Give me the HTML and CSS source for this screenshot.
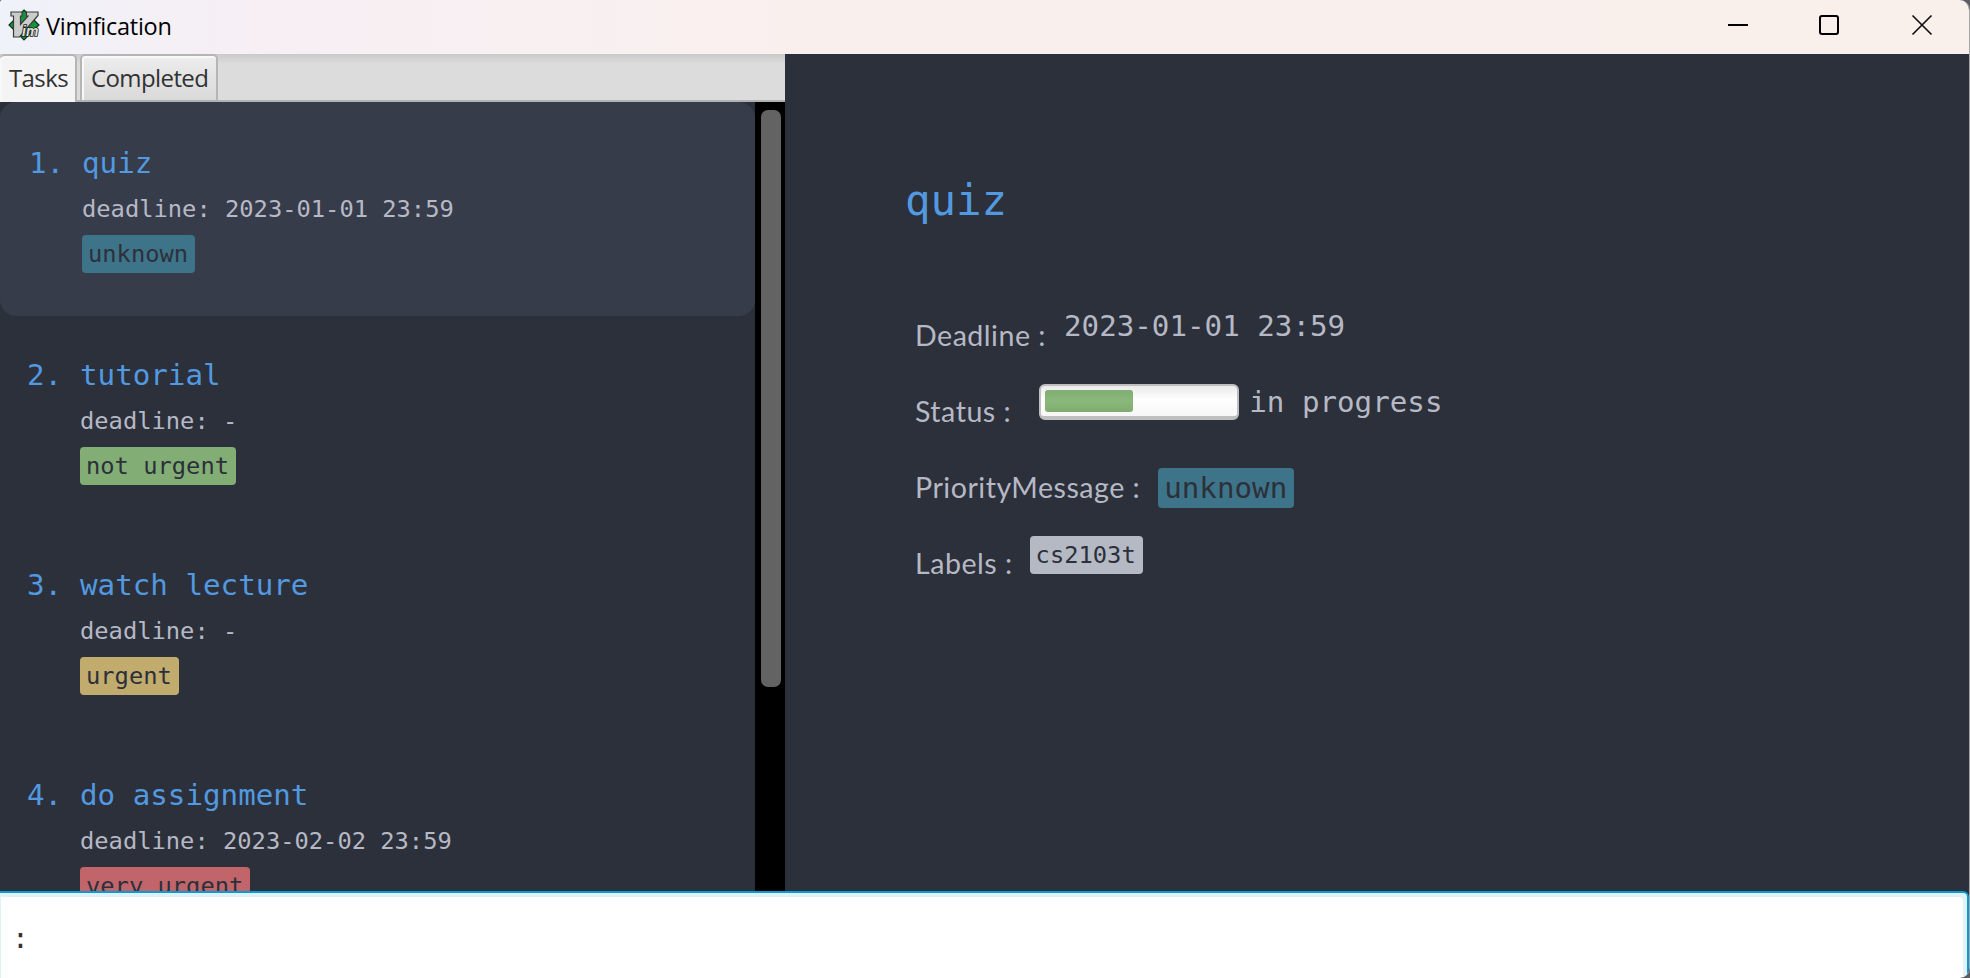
FILE: index.html
```html
<!DOCTYPE html>
<html lang="en">
<head>
<meta charset="utf-8">
<title>Vimification</title>
<link rel="stylesheet" href="styles.css">
</head>
<body>
<div class="window">
  <header class="titlebar">
    <svg class="app-icon" viewBox="0 0 32 32" width="32" height="32">
      <path d="M16 1 31 16 16 31 1 16Z" fill="#15933c" stroke="#12301c" stroke-width="1.2"/>
      <path d="M3 3H14V7H12.500V15.500L20 7H18.500V3H30V6.500L11.500 28H5.500V7H3Z" fill="#ccccca" stroke="#3a3a3a" stroke-width="1.2"/>
      <text class="app-icon-text" x="14" y="27">im</text>
    </svg>
    <span class="app-name">Vimification</span>
    <div class="window-buttons">
      <svg class="minimize" viewBox="0 0 22 22" width="22" height="22"><path d="M1 11H21" stroke="#000" stroke-width="2"/></svg>
      <svg viewBox="0 0 22 22" width="22" height="22"><rect x="2" y="2" width="18" height="18" rx="2" fill="none" stroke="#000" stroke-width="2"/></svg>
      <svg viewBox="0 0 22 22" width="22" height="22"><path d="M1.500 1.500 20.500 20.500M20.500 1.500 1.500 20.500" stroke="#111" stroke-width="1.700"/></svg>
    </div>
  </header>
  <main class="content">
    <section class="tasks">
      <nav class="tabs">
        <div class="tab active">Tasks</div>
        <div class="tab">Completed</div>
      </nav>
      <div class="list-area">
        <div class="list">
          <article class="task selected">
            <span class="index">1.</span>
            <div class="task-body">
              <h2>quiz</h2>
              <p>deadline: 2023-01-01 23:59</p>
              <span class="badge unknown">unknown</span>
            </div>
          </article>
          <article class="task">
            <span class="index">2.</span>
            <div class="task-body">
              <h2>tutorial</h2>
              <p>deadline: -</p>
              <span class="badge low">not urgent</span>
            </div>
          </article>
          <article class="task">
            <span class="index">3.</span>
            <div class="task-body">
              <h2>watch lecture</h2>
              <p>deadline: -</p>
              <span class="badge medium">urgent</span>
            </div>
          </article>
          <article class="task">
            <span class="index">4.</span>
            <div class="task-body">
              <h2>do assignment</h2>
              <p>deadline: 2023-02-02 23:59</p>
              <span class="badge high">very urgent</span>
            </div>
          </article>
        </div>
        <div class="scrollbar"><div class="thumb"></div></div>
      </div>
    </section>
    <section class="detail">
      <h1>quiz</h1>
      <div class="row"><span class="key">Deadline :</span><span class="value date">2023-01-01 23:59</span></div>
      <div class="row"><span class="key">Status :</span><div class="progress"><div class="progress-bar"></div></div><span class="value">in progress</span></div>
      <div class="row"><span class="key">PriorityMessage :</span><span class="badge large unknown">unknown</span></div>
      <div class="row"><span class="key">Labels :</span><span class="badge label">cs2103t</span></div>
    </section>
  </main>
  <footer class="command">:</footer>
</div>
</body>
</html>
```
FILE: styles.css
```css
* { box-sizing: border-box; }
body { margin: 0; background: #5c5e62; }
h1, h2, p { margin: 0; font-weight: 400; }
.window {
  width: 1970px;
  height: 978px;
  display: flex;
  flex-direction: column;
  overflow: hidden;
  border-right: 1px solid #a5a6a8;
  border-radius: 2px 10px 10px 0;
  background: #2c303a;
  font-family: "DejaVu Sans Mono", monospace;
  color: #b6b9c5;
}
.titlebar {
  height: 54px;
  flex: none;
  display: flex;
  align-items: flex-start;
  padding: 9px 36px 0 8px;
  background: linear-gradient(90deg, #eff2f9 0, #f7eff4 260px, #f9f0ee 800px, #f9f0ec 100%);
}
.app-icon { flex: none; }
.app-icon-text {
  font: italic 700 14px "Liberation Sans", sans-serif;
  fill: #deded8;
  stroke: #222;
  stroke-width: 1.6px;
  paint-order: stroke;
}
.app-name {
  margin-left: 6px;
  font: 23.5px/34px "Open Sans", sans-serif;
  letter-spacing: -0.25px;
  color: #000;
}
.window-buttons {
  display: flex;
  gap: 71px;
  margin: 5px 0 0 auto;
}
.window-buttons svg { display: block; }
.window-buttons .minimize { margin-right: -2px; }
.content { height: 837px; flex: none; display: flex; }
.tasks { width: 785px; flex: none; display: flex; flex-direction: column; }
.tabs {
  height: 48px;
  flex: none;
  display: flex;
  gap: 3px;
  background: linear-gradient(#cacaca, #dcdcdc 10px);
  border-bottom: 2px solid #b1b3b3;
}
.tab {
  height: 46px;
  width: 138px;
  padding: 0 9px;
  border: 2px solid #b5b5b5;
  border-bottom: 0;
  border-radius: 5px 5px 0 0;
  background: linear-gradient(#ededed, #d9d9d9);
  box-shadow: inset 1px 1px 0 1px #f8f8f8;
  font: 24px/44px "Open Sans", sans-serif;
  letter-spacing: -0.6px;
  color: #323232;
}
.tab.active {
  height: 48px;
  width: 77px;
  border-left: 0;
  background: #f4f4f4;
}
.list-area { flex: 1; min-height: 0; display: flex; }
.list { width: 755px; overflow: hidden; }
.task { height: 210px; display: flex; padding: 39px 0 0 27px; }
.task.selected {
  height: 214px;
  padding: 41px 0 0 29px;
  background: #363c4a;
  border-radius: 16px;
}
.index { width: 53px; flex: none; }
.index, .task h2 { font-size: 29.2px; line-height: 40px; color: #5299e0; }
.task-body { display: flex; flex-direction: column; align-items: flex-start; gap: 6px; white-space: nowrap; }
.task p { font-size: 23.75px; line-height: 40px; }
.badge {
  padding: 0 7px 0 6px;
  border-radius: 4px;
  font-size: 23.75px;
  line-height: 38px;
  height: 38px;
  color: #2c303a;
}
.unknown { background: #3e7489; }
.low { background: #82ae76; }
.medium { background: #c1ab6d; }
.high { background: #c2656a; }
.label { background: #b4b9c4; margin: -2px 0 0 17px; }
.scrollbar { width: 30px; background: #000; padding: 8px 4px 0 6px; }
.thumb { height: 577px; border-radius: 7px; background: #636363; }
.detail { flex: 1; padding: 112px 0 0 120px; }
.detail h1 { font-size: 42.4px; line-height: 70px; color: #5299e0; height: 134px; }
.row { height: 76px; display: flex; align-items: flex-start; padding: 10px 0 0 10px; white-space: nowrap; }
.row > * { flex: none; }
.key { font: 28.6px/50px "Lato", sans-serif; letter-spacing: 0.5px; }
.value { font-size: 29.2px; line-height: 40px; margin-top: -4px; }
.date { margin-left: 18px; }
.progress {
  width: 200px;
  height: 36px;
  margin: -2px 10px 0 28px;
  padding: 4px;
  border: 2px solid #bfbfc0;
  border-bottom-width: 4px;
  border-radius: 6px;
  background: linear-gradient(#ebebeb, #fff 45%, #f7f7f7);
}
.progress-bar { width: 88px; height: 22px; border-radius: 3px; background: linear-gradient(#80ad72, #89b97a 50%, #80ab70); }
.badge.large { font-size: 29.2px; line-height: 40px; height: 40px; margin: 6px 0 0 18px; }
.command {
  flex: 1;
  padding: 28px 0 0 12px;
  background: #fff;
  border: 2px solid #0a9ad4;
  border-left: 0;
  border-bottom: 0;
  border-radius: 0 6px 0 0;
  box-shadow: inset -4px 4px 0 #dff2fa, inset 1px 0 0 #dff2fa;
  font-size: 28px;
  line-height: 36px;
  color: #323232;
}
```
